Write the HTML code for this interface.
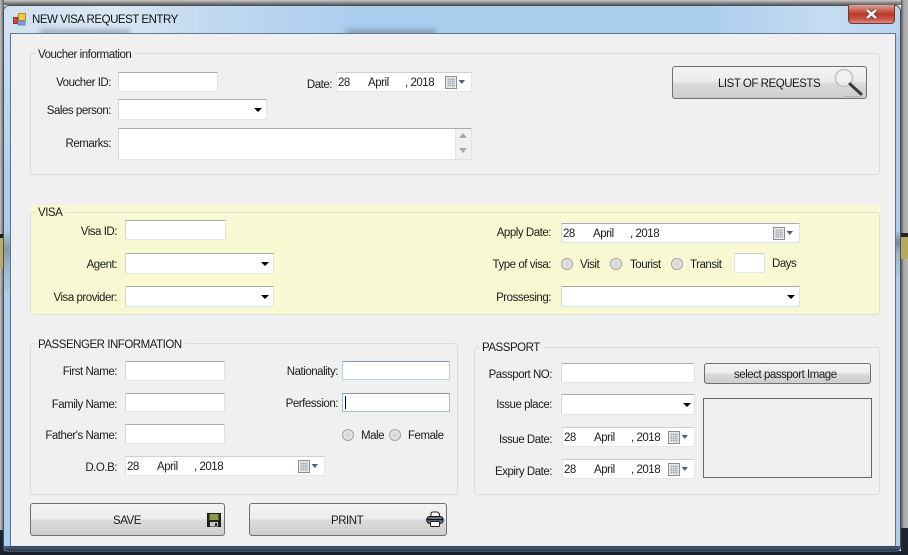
<!DOCTYPE html>
<html><head><meta charset="utf-8"><style>
html,body{margin:0;padding:0;width:908px;height:555px;overflow:hidden;background:#f0f0f0}
body{position:relative;font-family:"Liberation Sans",sans-serif;font-size:11.5px;letter-spacing:-.47px;color:#1c1c1c}
div{position:absolute;box-sizing:border-box}
.l{left:0;text-align:right;white-space:nowrap;height:14px;line-height:14px;margin-top:1px}
.t{white-space:nowrap;height:14px;line-height:14px;margin-top:1px}
.g{border:1px solid #dcdcdc;border-radius:3px}
.f{background:#fff;border:1px solid #e2e3e4;border-top-color:#ababab;border-left-color:#d8d8d8;border-radius:1px}
.d{background:#fff;border:1px solid #e6e6e6;border-top-color:#cfcfcf}
.a{width:0;height:0;border:4px solid transparent;border-top:4px solid #000;border-bottom:0}
.b{border:1px solid #707070;border-radius:3px;background:linear-gradient(#f3f3f3 0,#ececec 49%,#dcdcdc 50%,#cdcdcd 100%);text-align:center}
.r{width:12px;height:12px;border-radius:50%;border:1px solid #a2a3a3;background:radial-gradient(circle,#d4d4d4 0,#dedede 45%,#f4f4f4 100%)}
svg{position:absolute}
</style></head><body>
<!-- surroundings -->
<div style="left:0;top:0;width:908px;height:5px;background:linear-gradient(#c8c8c8,#5a5a5a)"></div>
<div style="left:0;top:0;width:4px;height:555px;background:linear-gradient(90deg,#c4c4c4,#5c5c5c)"></div>
<div style="left:0;top:234px;width:4px;height:4px;background:#222"></div>
<div style="left:0;top:238px;width:4px;height:30px;background:#b7ac6c"></div>
<div style="left:901px;top:0;width:7px;height:555px;background:linear-gradient(90deg,#555,#a8a8a8 40%,#b8b8b8)"></div>
<div style="left:901px;top:233px;width:7px;height:4px;background:#222"></div>
<div style="left:901px;top:237px;width:7px;height:22px;background:#b5a95c"></div>
<div style="left:901px;top:528px;width:7px;height:27px;background:#1c2433"></div>
<div style="left:0;top:551px;width:908px;height:4px;background:#18202e"></div>
<div style="left:0;top:530px;width:4px;height:25px;background:#1c2433"></div>
<!-- window frame -->
<div style="left:3px;top:5px;width:898px;height:547px;border-radius:6px 6px 5px 5px;border:1px solid #4a4f55;background:#aecdec;overflow:hidden">
  <div style="left:0;top:0;width:896px;height:28px;background:linear-gradient(90deg,#cfe0f0 0,#dbe8f4 12%,#c2daf1 22%,#aacdee 40%,#aacdee 78%,#c5dcf1 92%,#b8d4ee 100%)"></div>
  <div style="left:36px;top:24px;width:90px;height:5px;background:#8c9cb2;filter:blur(3px)"></div>
  <div style="left:342px;top:24px;width:90px;height:5px;background:#7e8da3;filter:blur(3px)"></div>
  <div style="left:0;top:28px;width:6px;height:130px;background:linear-gradient(#cddff0,#b4d0ea)"></div>
  <div style="left:0;top:225px;width:6px;height:60px;background:linear-gradient(#a9c8e5,#8a98a8 30%,#9db4cc 60%,#a9c8e5)"></div>
  <div style="left:892px;top:225px;width:6px;height:45px;background:linear-gradient(#a9c8e5,#7b8999 25%,#9db4cc 50%,#a9c8e5)"></div>
</div>
<div style="left:4px;top:546px;width:896px;height:5px;background:linear-gradient(#46607e,#2c3a4e);border-radius:0 0 4px 4px"></div>
<!-- client -->
<div style="left:10px;top:33px;width:886px;height:514px;background:#f0f0f0;border:1px solid #5e7891;border-bottom-color:#33465c"></div>
<!-- title -->
<svg style="left:12px;top:12px" width="15" height="15" viewBox="0 0 15 15"><rect x="6.5" y="1.5" width="7" height="7" fill="#f4c93c" stroke="#b58a2a"/><rect x="1.5" y="5.5" width="4" height="6" fill="#d5483a" stroke="#963427"/><rect x="6" y="9" width="7" height="4" fill="#7f9ce0" stroke="#6a84c0"/></svg>
<div class="t" style="left:32px;top:12px;color:#111">NEW VISA REQUEST ENTRY</div>
<!-- close -->
<div style="left:848px;top:5px;width:47px;height:19px;border:1px solid #6e3a34;border-top:0;border-radius:0 0 4px 4px;background:linear-gradient(#d8a49a 0,#c9705f 25%,#b93a26 50%,#c7594a 80%,#d88b80 100%)"></div>
<svg style="left:864px;top:8px" width="15" height="12" viewBox="0 0 15 12"><path d="M3 2 L12 10 M12 2 L3 10" stroke="#5a2a26" stroke-width="4"/><path d="M3 2 L12 10 M12 2 L3 10" stroke="#f3f0ee" stroke-width="2.6"/></svg>

<!-- Voucher -->
<div class="g" style="left:30px;top:53px;width:850px;height:122px"></div>
<div class="t" style="left:35px;top:47px;background:#f0f0f0;padding:0 3px">Voucher information</div>
<div class="l" style="width:111px;top:75px">Voucher ID:</div>
<div class="f" style="left:118px;top:72px;width:100px;height:20px"></div>
<div class="l" style="width:111px;top:103px">Sales person:</div>
<div class="f" style="left:118px;top:99px;width:149px;height:21px"></div><div class="a" style="left:254px;top:108px"></div>
<div class="l" style="width:111px;top:136px">Remarks:</div>
<div class="f" style="left:118px;top:128px;width:354px;height:32px"></div>
<div style="left:455px;top:129px;width:16px;height:30px;background:#f1f1f1;border-left:1px solid #e2e2e2"></div>
<div style="left:459px;top:133px;border:4px solid transparent;border-bottom:5px solid #a9a9a9;border-top:0"></div>
<div style="left:459px;top:148px;border:4px solid transparent;border-top:5px solid #a9a9a9;border-bottom:0"></div>
<div class="l" style="width:332px;top:77px">Date:</div>
<div class="d" style="left:336px;top:72px;width:136px;height:20px"></div>
<div class="t" style="left:338px;top:75px">28</div><div class="t" style="left:368px;top:75px">April</div><div class="t" style="left:405px;top:75px">, 2018</div>
<svg style="left:445px;top:76px" width="20" height="13" viewBox="0 0 20 13"><rect x="0.5" y="0.5" width="11" height="12" fill="#e6e9ec" stroke="#8b9096"/><path d="M2 3.5H10M2 5.5H10M2 7.5H10M2 9.5H10M3.5 2V11M5.5 2V11M7.5 2V11M9 2V11" stroke="#aeb3b9" stroke-width=".7"/><path d="M13.5 4h6.5l-3.2 4z" fill="#4d6185"/></svg>
<div class="b" style="left:672px;top:66px;width:195px;height:33px"></div>
<div class="t" style="left:718px;top:76px;color:#1a1a1a">LIST OF REQUESTS</div>
<svg style="left:832px;top:68px" width="32" height="30" viewBox="0 0 32 30"><circle cx="12" cy="10" r="8.5" fill="#f2f4f4" fill-opacity=".6" stroke="#c0c4c4" stroke-width="1.6"/><path d="M18 16 L29 26" stroke="#3c3c3c" stroke-width="3" stroke-linecap="round"/><path d="M12 28.5H29" stroke="#b0b0b0" stroke-width="1"/></svg>

<!-- VISA -->
<div style="left:30px;top:205px;width:850px;height:110px;background:#f8f8d2;border-radius:3px"></div>
<div style="left:30px;top:212px;width:850px;height:103px;border:1px solid #dfe0d6;border-radius:3px"></div>
<div class="t" style="left:35px;top:205px;background:#f8f8d2;padding:0 3px">VISA</div>
<div class="l" style="width:117px;top:224px">Visa ID:</div>
<div class="f" style="left:125px;top:220px;width:101px;height:20px"></div>
<div class="l" style="width:117px;top:257px">Agent:</div>
<div class="f" style="left:125px;top:253px;width:149px;height:21px"></div><div class="a" style="left:261px;top:262px"></div>
<div class="l" style="width:117px;top:290px">Visa provider:</div>
<div class="f" style="left:125px;top:286px;width:149px;height:21px"></div><div class="a" style="left:261px;top:295px"></div>
<div class="l" style="width:551px;top:225px">Apply Date:</div>
<div class="f" style="left:561px;top:223px;width:239px;height:20px"></div>
<div class="t" style="left:563px;top:226px">28</div><div class="t" style="left:593px;top:226px">April</div><div class="t" style="left:630px;top:226px">, 2018</div>
<svg style="left:773px;top:227px" width="20" height="13" viewBox="0 0 20 13"><rect x="0.5" y="0.5" width="11" height="12" fill="#e6e9ec" stroke="#8b9096"/><path d="M2 3.5H10M2 5.5H10M2 7.5H10M2 9.5H10M3.5 2V11M5.5 2V11M7.5 2V11M9 2V11" stroke="#aeb3b9" stroke-width=".7"/><path d="M13.5 4h6.5l-3.2 4z" fill="#4d6185"/></svg>
<div class="l" style="width:551px;top:257px">Type of visa:</div>
<div class="r" style="left:561px;top:258px"></div><div class="t" style="left:580px;top:257px">Visit</div>
<div class="r" style="left:610px;top:258px"></div><div class="t" style="left:630px;top:257px">Tourist</div>
<div class="r" style="left:671px;top:258px"></div><div class="t" style="left:690px;top:257px">Transit</div>
<div class="d" style="left:734px;top:253px;width:31px;height:20px"></div>
<div class="t" style="left:772px;top:256px">Days</div>
<div class="l" style="width:551px;top:290px">Prossesing:</div>
<div class="f" style="left:561px;top:286px;width:239px;height:21px"></div><div class="a" style="left:787px;top:295px"></div>

<!-- Passenger -->
<div class="g" style="left:30px;top:343px;width:428px;height:152px"></div>
<div class="t" style="left:35px;top:337px;background:#f0f0f0;padding:0 3px">PASSENGER INFORMATION</div>
<div class="l" style="width:117px;top:364px">First Name:</div>
<div class="f" style="left:125px;top:361px;width:100px;height:20px"></div>
<div class="l" style="width:117px;top:397px">Family Name:</div>
<div class="f" style="left:125px;top:393px;width:100px;height:19px"></div>
<div class="l" style="width:117px;top:428px">Father's Name:</div>
<div class="f" style="left:125px;top:424px;width:100px;height:20px"></div>
<div class="l" style="width:117px;top:460px">D.O.B:</div>
<div class="d" style="left:125px;top:456px;width:200px;height:20px"></div>
<div class="t" style="left:127px;top:459px">28</div><div class="t" style="left:157px;top:459px">April</div><div class="t" style="left:194px;top:459px">, 2018</div>
<svg style="left:298px;top:460px" width="20" height="13" viewBox="0 0 20 13"><rect x="0.5" y="0.5" width="11" height="12" fill="#e6e9ec" stroke="#8b9096"/><path d="M2 3.5H10M2 5.5H10M2 7.5H10M2 9.5H10M3.5 2V11M5.5 2V11M7.5 2V11M9 2V11" stroke="#aeb3b9" stroke-width=".7"/><path d="M13.5 4h6.5l-3.2 4z" fill="#4d6185"/></svg>
<div class="l" style="width:338px;top:364px">Nationality:</div>
<div style="left:342px;top:361px;width:108px;height:19px;background:#fff;border:1px solid #bcd2e4;border-top-color:#7f9db9"></div>
<div class="l" style="width:338px;top:396px">Perfession:</div>
<div style="left:342px;top:393px;width:108px;height:19px;background:#fff;border:1px solid #a5c0d6;border-top-color:#7f9db9"></div>
<div style="left:345px;top:396px;width:1px;height:13px;background:#000"></div>
<div class="r" style="left:342px;top:429px"></div><div class="t" style="left:361px;top:428px">Male</div>
<div class="r" style="left:389px;top:429px"></div><div class="t" style="left:408px;top:428px">Female</div>

<!-- Passport -->
<div class="g" style="left:474px;top:347px;width:406px;height:148px"></div>
<div class="t" style="left:479px;top:340px;background:#f0f0f0;padding:0 3px">PASSPORT</div>
<div class="l" style="width:552px;top:367px">Passport NO:</div>
<div class="f" style="left:561px;top:363px;width:134px;height:20px"></div>
<div class="b" style="left:704px;top:363px;width:167px;height:21px"></div>
<div class="t" style="left:734px;top:367px">select passport Image</div>
<div class="l" style="width:552px;top:397px">Issue place:</div>
<div class="f" style="left:561px;top:394px;width:134px;height:21px"></div><div class="a" style="left:683px;top:403px"></div>
<div class="l" style="width:552px;top:432px">Issue Date:</div>
<div class="d" style="left:562px;top:427px;width:133px;height:20px"></div>
<div class="t" style="left:564px;top:430px">28</div><div class="t" style="left:594px;top:430px">April</div><div class="t" style="left:631px;top:430px">, 2018</div>
<svg style="left:668px;top:431px" width="20" height="13" viewBox="0 0 20 13"><rect x="0.5" y="0.5" width="11" height="12" fill="#e6e9ec" stroke="#8b9096"/><path d="M2 3.5H10M2 5.5H10M2 7.5H10M2 9.5H10M3.5 2V11M5.5 2V11M7.5 2V11M9 2V11" stroke="#aeb3b9" stroke-width=".7"/><path d="M13.5 4h6.5l-3.2 4z" fill="#4d6185"/></svg>
<div class="l" style="width:552px;top:464px">Expiry Date:</div>
<div class="d" style="left:562px;top:459px;width:133px;height:20px"></div>
<div class="t" style="left:564px;top:462px">28</div><div class="t" style="left:594px;top:462px">April</div><div class="t" style="left:631px;top:462px">, 2018</div>
<svg style="left:668px;top:463px" width="20" height="13" viewBox="0 0 20 13"><rect x="0.5" y="0.5" width="11" height="12" fill="#e6e9ec" stroke="#8b9096"/><path d="M2 3.5H10M2 5.5H10M2 7.5H10M2 9.5H10M3.5 2V11M5.5 2V11M7.5 2V11M9 2V11" stroke="#aeb3b9" stroke-width=".7"/><path d="M13.5 4h6.5l-3.2 4z" fill="#4d6185"/></svg>
<div style="left:703px;top:398px;width:169px;height:80px;border:1px solid #666"></div>

<!-- bottom buttons -->
<div class="b" style="left:30px;top:503px;width:195px;height:33px"></div>
<div class="t" style="left:113px;top:513px">SAVE</div>
<svg style="left:207px;top:513px" width="14" height="14" viewBox="0 0 14 14"><rect x="0.5" y="0.5" width="13" height="13" fill="#23251b" stroke="#1a1a1a"/><rect x="2.5" y="1" width="9" height="6" fill="#8f9a48"/><rect x="3" y="9" width="8" height="4.5" fill="#c8c8c8"/><rect x="8" y="10" width="2" height="3" fill="#222"/></svg>
<div class="b" style="left:249px;top:503px;width:198px;height:33px"></div>
<div class="t" style="left:331px;top:513px">PRINT</div>
<svg style="left:426px;top:511px" width="18" height="17" viewBox="0 0 18 17"><path d="M5 6V2.5C5 1.5 6 1 7 1H11.5L13.5 3V6" fill="#fff" stroke="#222"/><rect x="0.7" y="5.5" width="16.5" height="7" rx="3.2" fill="#62768a" stroke="#111"/><rect x="1" y="8" width="16" height="1.2" fill="#111"/><rect x="4.5" y="10.5" width="9" height="5" rx="1" fill="#fff" stroke="#222"/></svg>
</body></html>
